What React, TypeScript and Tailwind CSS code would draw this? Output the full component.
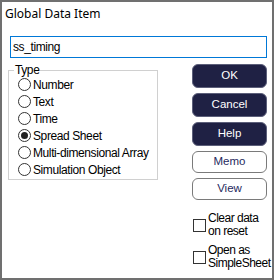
const types = [
  "Number",
  "Text",
  "Time",
  "Spread Sheet",
  "Multi-dimensional Array",
  "Simulation Object",
];

function Radio({ label, checked }: { label: string; checked?: boolean }) {
  return (
    <div className="flex h-[17px] items-center pl-[9px]">
      <span className="flex h-[13px] w-[13px] shrink-0 items-center justify-center rounded-full border border-[#333333] bg-white">
        {checked && <span className="h-[7px] w-[7px] rounded-full bg-[#222222]" />}
      </span>
      <span className="ml-[2px] whitespace-nowrap">{label}</span>
    </div>
  );
}

function Check({ lines }: { lines: string[] }) {
  return (
    <div className="flex items-center pl-[1px]">
      <span className="h-[13px] w-[13px] shrink-0 border border-[#333333] bg-white" />
      <div className="ml-[2px] leading-[13px]">
        {lines.map((l) => (
          <div key={l} className="whitespace-nowrap">
            {l}
          </div>
        ))}
      </div>
    </div>
  );
}

export default function App() {
  return (
    <div
      className="h-[280px] w-[274px] border-2 border-[#707070] bg-white text-black"
      style={{ fontFamily: '"Liberation Sans", Arial, sans-serif' }}
    >
      {/* Titel */}
      <div className="mt-[4px] h-[16px] pl-[3px] font-['Noto_Sans',sans-serif] text-[12px] leading-[16px]">
        Global Data Item
      </div>

      {/* Name */}
      <div className="ml-[8px] mt-[14px] flex h-[22px] w-[257px] items-center border border-[#0078d7] pl-[2px] text-[12px] tracking-[-0.4px]">
        ss_timing
      </div>

      <div className="mt-[6px] flex">
        {/* Type group */}
        <fieldset className="m-0 ml-[6px] h-[116px] w-[150px] border border-[#d0d0d0] p-0 pb-[2px] text-[12px] leading-[14px] tracking-[-0.4px]">
          <legend className="ml-[5px] px-[1px] leading-[12px]">Type</legend>
          {types.map((t) => (
            <Radio key={t} label={t} checked={t === "Spread Sheet"} />
          ))}
        </fieldset>

        {/* Buttons */}
        <div className="ml-auto mr-[5px] flex w-[75px] flex-col">
          <button className="h-[24px] rounded-[6px] border border-[#5c5f7a] bg-[#1f2144] text-[11.5px] text-white">
            OK
          </button>
          <button className="mt-[5px] h-[24px] rounded-[6px] border border-[#5c5f7a] bg-[#1f2144] text-[11.5px] text-white">
            Cancel
          </button>
          <button className="mt-[5px] h-[24px] rounded-[6px] border border-[#5c5f7a] bg-[#1f2144] text-[11.5px] text-white">
            Help
          </button>
          <button className="mt-[5px] h-[22px] rounded-[6px] border-[1.5px] border-[#7a7a7a] bg-white text-[11.5px] text-[#1f2a5e]">
            Memo
          </button>
          <button className="mt-[5px] h-[22px] rounded-[6px] border-[1.5px] border-[#7a7a7a] bg-white text-[11.5px] text-[#1f2a5e]">
            View
          </button>

          <div className="mt-[12px] flex flex-col gap-[6px] text-[12px] tracking-[-0.5px]">
            <Check lines={["Clear data", "on reset"]} />
            <Check lines={["Open as", "SimpleSheet"]} />
          </div>
        </div>
      </div>
    </div>
  );
}
